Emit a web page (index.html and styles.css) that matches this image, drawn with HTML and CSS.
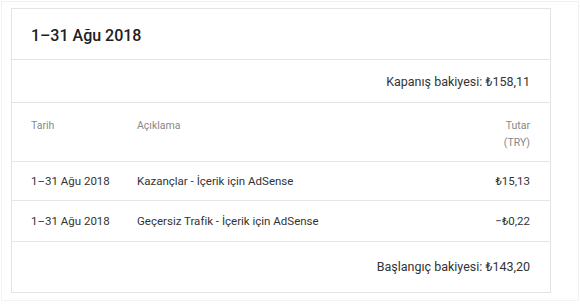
FILE: index.html
```html
<!DOCTYPE html>
<html lang="tr">
<head>
<meta charset="utf-8">
<link rel="stylesheet" href="styles.css">
</head>
<body>
<div class="frame">
  <div class="card">
    <div class="title">1–31 Ağu 2018</div>
    <div class="balance closing">Kapanış bakiyesi: ₺158,11</div>
    <div class="row head">
      <div class="c-date">Tarih</div>
      <div class="c-desc">Açıklama</div>
      <div class="c-amt">Tutar<br>(TRY)</div>
    </div>
    <div class="row item first">
      <div class="c-date">1–31 Ağu 2018</div>
      <div class="c-desc">Kazançlar - İçerik için AdSense</div>
      <div class="c-amt">₺15,13</div>
    </div>
    <div class="row item second">
      <div class="c-date">1–31 Ağu 2018</div>
      <div class="c-desc">Geçersiz Trafik - İçerik için AdSense</div>
      <div class="c-amt">−₺0,22</div>
    </div>
    <div class="balance opening">Başlangıç bakiyesi: ₺143,20</div>
  </div>
</div>
</body>
</html>
```

FILE: styles.css
```css
html, body {
  margin: 0;
  padding: 0;
  background: #fff;
}
body {
  font-family: Roboto, "Noto Sans", sans-serif;
  color: #212121;
}
.frame {
  margin: 1px 1px 0 1px;
  height: 300px;
  box-sizing: border-box;
  border: 1px solid #f2f2f2;
  padding: 6px 27px 0 9px;
}
.card {
  border: 1px solid #e3e3e3;
  box-sizing: border-box;
  height: 285px;
  display: flex;
  flex-direction: column;
}
.title {
  height: 51px;
  box-sizing: border-box;
  padding: 17px 20px 0 19px;
  font-size: 16px;
  font-weight: 500;
  color: #202020;
  border-bottom: 1px solid #e3e3e3;
}
.balance {
  box-sizing: border-box;
  text-align: right;
  padding-right: 20px;
  font-size: 12.5px;
  color: #333;
}
.closing {
  height: 43px;
  padding-top: 14px;
  border-bottom: 1px solid #e3e3e3;
}
.opening {
  flex: 1;
  padding-top: 17px;
}
.row {
  display: flex;
  box-sizing: border-box;
  padding: 0 20px 0 19px;
  border-bottom: 1px solid #e6e6e6;
}
.c-date { width: 106px; flex: none; }
.c-desc { flex: 1; }
.c-amt { text-align: right; }
.head {
  height: 59px;
  padding-top: 14px;
  font-size: 10.5px;
  color: #888;
  line-height: 17px;
}
.item {
  font-size: 11.5px;
  color: #333;
  padding-top: 12px;
}
.first { height: 39px; }
.second { height: 41px; padding-top: 13px; }
```
